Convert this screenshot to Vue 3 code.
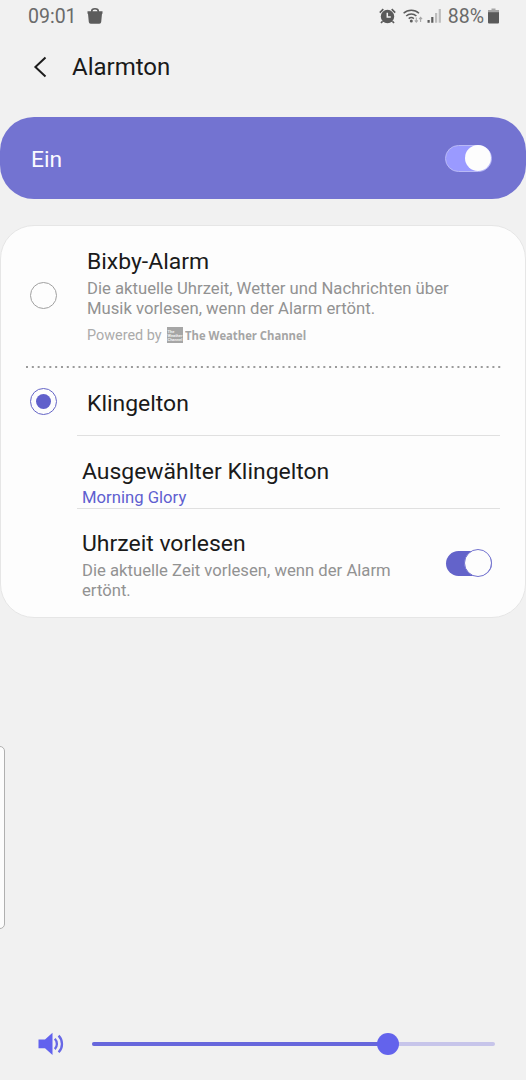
<template>
  <div class="screen">
    <div class="status-bar">
      <span class="time">09:01</span>
      <svg class="bag" viewBox="0 0 16 16" width="16" height="16">
        <path d="M4.7 4v-.8C4.7 1.600 6.100.8 8 .8s3.300.8 3.300 2.400V4" fill="none" stroke="#5c5c5c" stroke-width="1.600" />
        <path d="M.5 3.300h15v2.400h-.5l-.8 8.300a1.900 1.900 0 0 1-1.900 1.700H3.700a1.900 1.900 0 0 1-1.900-1.700L1 5.700H.5z" fill="#5c5c5c" />
      </svg>
      <div class="status-icons">
        <svg viewBox="0 0 17 16" width="17" height="16">
          <circle cx="8.500" cy="8.500" r="6.700" fill="#5a5a5a" />
          <path d="M.8 4.600 4.300 1.200M16.200 4.600 12.700 1.200M3.600 13.200 2 15M13.400 13.200 15 15" stroke="#5a5a5a" stroke-width="1.700" />
          <path d="M8.300 4.700v4.200h3.500" fill="none" stroke="#f1f1f1" stroke-width="1.500" />
        </svg>
        <svg class="wifi" viewBox="0 0 20 16" width="20" height="16">
          <g fill="none" stroke="#5c5c5c" stroke-width="1.500">
            <path d="M.6 5.200a11.300 11.300 0 0 1 15.400 0" />
            <path d="M3.200 8a7.500 7.500 0 0 1 10.200 0" />
            <path d="M5.700 10.600a4 4 0 0 1 5.200 0" />
          </g>
          <circle cx="8.300" cy="13" r="1.500" fill="#5c5c5c" />
          <path d="M13.300 9.500v4.500M11.800 12.400l1.500 1.800 1.500-1.800M17.600 14V9.500M16.100 11.200l1.500-1.800 1.500 1.800" fill="none" stroke="#a8a8a8" stroke-width="1.100" />
        </svg>
        <svg class="signal" viewBox="0 0 15 16" width="15" height="16">
          <path d="M.5 12h2.200v2.800H.5zM4.200 9h2.200v5.800H4.200z" fill="#5c5c5c" />
          <path d="M8 5h2.200v9.800H8zM11.700 1h2.200v13.800h-2.200z" fill="#bdbdbd" />
        </svg>
        <span class="percent">88%</span>
        <svg class="battery" viewBox="0 0 11 16" width="11" height="16">
          <path d="M3.500.5h4V2H11v3H0V2h3.500z" fill="#a5a5a5" />
          <path d="M0 4.200h11v10.300a1 1 0 0 1-1 1H1a1 1 0 0 1-1-1z" fill="#5a5a5a" />
        </svg>
      </div>
    </div>

    <header class="header">
      <svg class="back" viewBox="0 0 14 22" width="14" height="22">
        <path d="M12.500 1.600 2.400 11l10.100 9.400" fill="none" stroke="#1c1c1c" stroke-width="2" />
      </svg>
      <h1>Alarmton</h1>
    </header>

    <div class="banner" @click="enabled = !enabled">
      <span class="banner-label">Ein</span>
      <div class="switch light" :class="{ on: enabled }"><i></i></div>
    </div>

    <section class="card">
      <div class="option bixby" @click="selected = 'bixby'">
        <span class="radio" :class="{ checked: selected === 'bixby' }"></span>
        <div class="option-body">
          <h2>Bixby-Alarm</h2>
          <p>Die aktuelle Uhrzeit, Wetter und Nachrichten über<br />Musik vorlesen, wenn der Alarm ertönt.</p>
          <div class="powered">
            <span>Powered by</span>
            <span class="logo">
              <span>The</span>
              <span>Weather</span>
              <span>Channel</span>
            </span>
            <b>The Weather Channel</b>
          </div>
        </div>
      </div>
      <svg class="dots" viewBox="0 0 475 2" width="475" height="2">
        <path d="M0 1h475" stroke="#9b9b9b" stroke-width="2" stroke-dasharray="2 3.830" />
      </svg>
      <div class="option ringtone" @click="selected = 'ringtone'">
        <span class="radio" :class="{ checked: selected === 'ringtone' }"></span>
        <h2>Klingelton</h2>
      </div>
      <div class="setting tone">
        <h2>Ausgewählter Klingelton</h2>
        <p class="value">Morning Glory</p>
      </div>
      <div class="setting speak" @click="readTime = !readTime">
        <div>
          <h2>Uhrzeit vorlesen</h2>
          <p>Die aktuelle Zeit vorlesen, wenn der Alarm<br />ertönt.</p>
        </div>
        <div class="switch" :class="{ on: readTime }"><i></i></div>
      </div>
    </section>

    <!-- edge panel handle, lies over the page -->
    <div class="edge-handle"></div>

    <footer class="volume">
      <svg viewBox="0 0 26 24" width="26" height="24">
        <path d="M.5 7.400H7L14.500.8v22.300L7 16.300H.5z" fill="#6262ee" />
        <path d="M16.800 6.800a7.400 7.400 0 0 1 0 10.300M20.600 3.600a12 12 0 0 1 0 16.700" fill="none" stroke="#6868e6" stroke-width="2.300" />
      </svg>
      <div class="track">
        <div class="fill" :style="{ width: volume + '%' }"><i></i></div>
      </div>
    </footer>
  </div>
</template>

<script setup>
import { ref } from 'vue'

const enabled = ref(true)
const selected = ref('ringtone')
const readTime = ref(true)
const volume = ref(73.4)
</script>

<style>
body {
  margin: 0;
  background: #f1f1f1;
}
</style>

<style scoped>
.screen {
  position: relative;
  display: flex;
  flex-direction: column;
  width: 526px;
  height: 1080px;
  overflow: hidden;
  background: #f1f1f1;
  color: #1a1a1a;
  font-family: Roboto, sans-serif;
}

h1,
h2,
p {
  margin: 0;
  font-weight: 400;
  white-space: nowrap;
}

.status-bar {
  display: flex;
  align-items: center;
  height: 32px;
  padding: 0 27px 0 28px;
  color: #6a6a6a;
  font-size: 19.5px;
}

.bag {
  margin-left: 10px;
}

.status-icons {
  display: flex;
  align-items: center;
  margin-left: auto;
}

.wifi {
  margin-left: 7px;
}

.signal {
  margin-left: 4px;
}

.percent {
  margin: 0 4px 0 6px;
}

.header {
  display: flex;
  align-items: center;
  height: 70px;
  padding: 0 33px 15px;
}

.header h1 {
  margin-left: 25px;
  font-size: 24px;
  line-height: 32px;
}

.banner {
  display: flex;
  align-items: center;
  justify-content: space-between;
  box-sizing: border-box;
  height: 82px;
  padding: 0 34px 0 31px;
  border-radius: 34px;
  background: #7373d1;
  color: #fafaff;
  font-size: 22.8px;
}

.banner-label {
  padding-top: 2px;
}

.switch {
  display: flex;
  align-items: center;
  box-sizing: border-box;
  width: 46px;
  height: 25px;
  border-radius: 13px;
  background: #b5b5b5;
}

.switch.on {
  justify-content: flex-end;
  background: #6363ca;
}

.switch i {
  flex: none;
  box-sizing: border-box;
  width: 28px;
  height: 28px;
  border: 1px solid #7373cf;
  border-radius: 50%;
  background: #fdfdfd;
}

.switch.light {
  width: 47px;
  height: 27px;
  border: 1px solid #b9b9f5;
  border-radius: 14px;
}

.switch.light.on {
  background: #9a9aff;
}

.switch.light i {
  width: 26px;
  height: 26px;
  border: none;
}

.card {
  box-sizing: border-box;
  height: 393px;
  margin-top: 26px;
  border: 1px solid #e6e6e6;
  border-radius: 34px;
  background: #fdfdfd;
}

.card h2 {
  font-size: 22.95px;
  line-height: 28px;
}

.card p {
  color: #929292;
  font-size: 16.68px;
  line-height: 20px;
}

.option {
  display: flex;
  align-items: center;
  padding-left: 29px;
}

.bixby {
  box-sizing: border-box;
  height: 140px;
  padding-bottom: 1px;
}

.option-body {
  padding-top: 2px;
}

.option-body p {
  margin-top: 3px;
}

.radio {
  display: flex;
  align-items: center;
  justify-content: center;
  box-sizing: border-box;
  width: 27px;
  height: 27px;
  margin-right: 30px;
  border: 1px solid #a0a0a0;
  border-radius: 50%;
}

.radio.checked {
  border-color: #6464c6;
}

.radio.checked::after {
  content: '';
  width: 15px;
  height: 15px;
  border-radius: 50%;
  background: #6060cb;
}

.powered {
  display: flex;
  align-items: center;
  height: 20px;
  margin-top: 6px;
  color: #ababab;
  font-size: 14.4px;
}

.powered b {
  color: #a5a5a5;
  font-family: "Open Sans", sans-serif;
  font-size: 12.8px;
  transform: scaleX(0.88);
  transform-origin: left center;
}

.logo {
  display: flex;
  flex-direction: column;
  justify-content: flex-end;
  box-sizing: border-box;
  width: 16px;
  height: 16px;
  margin: 0 2px 0 5px;
  padding: 0 0 1px 1px;
  overflow: hidden;
  background: #a6a6a6;
  color: #f1f1f1;
  font-size: 4px;
  font-weight: 700;
  line-height: 4px;
}

.dots {
  display: block;
  margin-left: 25px;
}

.ringtone {
  height: 67px;
}

.ringtone h2 {
  padding-top: 4px;
}

.setting {
  box-sizing: border-box;
  margin: 0 25px 0 76px;
  padding-left: 5px;
  border-top: 1px solid #e0e0e0;
}

.tone {
  height: 73px;
  padding-top: 22px;
}

.tone .value {
  margin-top: 2px;
  color: #5f5fd0;
}

.speak {
  display: flex;
  justify-content: space-between;
  padding: 21px 8.5px 0 5px;
}

.speak .switch {
  margin-top: 20.5px;
}

.speak p {
  margin-top: 3px;
}

.edge-handle {
  position: absolute;
  top: 746px;
  left: -8px;
  box-sizing: border-box;
  width: 13px;
  height: 183px;
  border: 1px solid #b0b0b0;
  border-radius: 5px;
  background: #fcfcfc;
}

.volume {
  display: flex;
  align-items: center;
  height: 24px;
  margin-top: auto;
  padding: 0 31px 24px 38px;
}

.track {
  flex: 1;
  height: 4px;
  margin-left: 28px;
  border-radius: 2px;
  background: #c7c5ea;
}

.fill {
  display: flex;
  align-items: center;
  justify-content: flex-end;
  height: 4px;
  border-radius: 2px;
  background: #6767dc;
}

.fill i {
  flex: none;
  width: 22px;
  height: 22px;
  margin-right: -11px;
  border-radius: 50%;
  background: #6363ec;
}
</style>
